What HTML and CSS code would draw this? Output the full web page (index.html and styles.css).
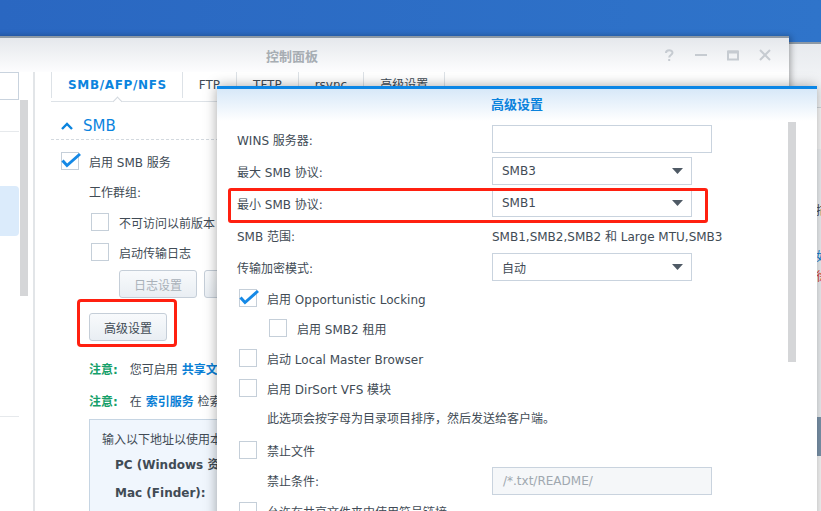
FILE: index.html
```html
<!DOCTYPE html>
<html lang="zh-CN">
<head>
    <meta charset="UTF-8">
    <meta name="viewport" content="width=device-width, initial-scale=1.0">
    <title>控制面板 - 高级设置</title>
    <link rel="stylesheet" href="styles.css">
</head>
<body>

<!-- fenêtre derrière, on n'en voit qu'une bande à droite -->
<div class="window back-window">
    <div class="back-title"></div>
    <div class="back-body">
        <div class="back-panel">
            <p class="back-text">描述</p>
            <p class="back-text back-link">如何</p>
            <p class="back-text back-warn">徐</p>
        </div>
        <div class="back-band"></div>
    </div>
</div>

<!-- fenêtre principale : 控制面板 -->
<div class="window main-window">
    <div class="titlebar">
        <span class="title">控制面板</span>
        <div class="win-controls">
            <svg viewBox="0 0 12 12"><path d="M3 4 C3 0.5 9.5 0.5 9.5 3.8 C9.5 6 6.2 6 6.2 8.5"/><path d="M6.2 10 V12"/></svg>
            <svg viewBox="0 0 12 12"><path d="M0 6 H12"/></svg>
            <svg viewBox="0 0 12 12"><path d="M1 2.5 H11 V10.5 H1 Z"/><path d="M1 3 H11" class="thick"/></svg>
            <svg viewBox="0 0 12 12"><path d="M1 1 L11 11 M11 1 L1 11"/></svg>
        </div>
    </div>

    <div class="win-body">
        <aside class="sidebar">
            <div class="side-list">
                <div class="side-search"></div>
                <div class="side-sep"></div>
                <div class="side-item active"></div>
                <div class="side-sep low"></div>
            </div>
            <div class="side-scroll"></div>
        </aside>

        <main class="content">
            <div class="tabs">
                <span class="tab active">SMB/AFP/NFS</span>
                <span class="tab">FTP</span>
                <span class="tab">TFTP</span>
                <span class="tab">rsync</span>
                <span class="tab">高级设置</span>
            </div>

            <div class="section-head">
                <svg class="chevron" viewBox="0 0 12 8"><path d="M1 7 L6 2 L11 7"/></svg>
                <span>SMB</span>
            </div>

            <div class="smb-form">
                <label class="row">
                    <span class="cb checked"><svg viewBox="0 0 22 18"><path d="M1.5 8.5 L6 13.5 L19 2"/></svg></span>
                    启用 SMB 服务
                </label>
                <div class="row sub">工作群组:</div>
                <label class="row sub-cb"><span class="cb"></span>不可访问以前版本</label>
                <label class="row sub-cb"><span class="cb"></span>启动传输日志</label>

                <div class="btn-row">
                    <button class="btn disabled">日志设置</button>
                    <button class="btn disabled">查看日志</button>
                </div>

                <div class="mark-box">
                    <button class="btn">高级设置</button>
                </div>

                <p class="note"><span class="note-tag">注意:</span>您可启用 <span class="link">共享文件夹</span> 的回收站以保留被删除的文件。</p>
                <p class="note"><span class="note-tag">注意:</span>在 <span class="link">索引服务</span> 检索多媒体文件内容。</p>

                <div class="info-box">
                    <p>输入以下地址以使用本机的文件服务:</p>
                    <p class="info-line">PC (Windows 资源管理器):</p>
                    <p class="info-line">Mac (Finder):</p>
                </div>
            </div>
        </main>
    </div>
</div>

<!-- boîte de dialogue 高级设置 -->
<div class="dialog">
    <div class="dialog-head">高级设置</div>
    <div class="dialog-body">
        <div class="dialog-form">
            <div class="form-row">
                <span class="label">WINS 服务器:</span>
                <span class="field"></span>
            </div>
            <div class="form-row">
                <span class="label">最大 SMB 协议:</span>
                <span class="select">SMB3<svg viewBox="0 0 11 6"><path d="M0 0 H11 L5.5 6 Z"/></svg></span>
            </div>
            <div class="form-row marked">
                <span class="label">最小 SMB 协议:</span>
                <span class="select">SMB1<svg viewBox="0 0 11 6"><path d="M0 0 H11 L5.5 6 Z"/></svg></span>
                <span class="mark"></span>
            </div>
            <div class="form-row">
                <span class="label">SMB 范围:</span>
                <span>SMB1,SMB2,SMB2 和 Large MTU,SMB3</span>
            </div>
            <div class="form-row">
                <span class="label">传输加密模式:</span>
                <span class="select">自动<svg viewBox="0 0 11 6"><path d="M0 0 H11 L5.5 6 Z"/></svg></span>
            </div>

            <label class="cb-row first">
                <span class="cb checked"><svg viewBox="0 0 22 18"><path d="M1.5 8.5 L6 13.5 L19 2"/></svg></span>
                启用 Opportunistic Locking
            </label>
            <label class="cb-row indent"><span class="cb"></span>启用 SMB2 租用</label>
            <label class="cb-row"><span class="cb"></span>启动 Local Master Browser</label>
            <label class="cb-row"><span class="cb"></span>启用 DirSort VFS 模块</label>
            <p class="desc">此选项会按字母为目录项目排序，然后发送给客户端。</p>
            <label class="cb-row"><span class="cb"></span>禁止文件</label>
            <div class="form-row veto">
                <span class="label">禁止条件:</span>
                <span class="field disabled">/*.txt/README/</span>
            </div>
            <label class="cb-row"><span class="cb"></span>允许在共享文件夹中使用符号链接</label>
        </div>
        <div class="dialog-scroll"></div>
    </div>
</div>

</body>
</html>
```

FILE: styles.css
```css
* {
    box-sizing: border-box;
}

body {
    margin: 0;
    width: 821px;
    height: 511px;
    overflow: hidden;
    position: relative;
    background: linear-gradient(90deg, #2a67c1, #2f74ca);
    font-family: "DejaVu Sans", "Noto Sans CJK SC", sans-serif;
    font-size: 12px;
    color: #414b55;
}

p {
    margin: 0;
}

.window {
    position: absolute;
    background: #fff;
    border-top: 2px solid #8d99a5;
}

/* fenêtre arrière */
.back-window {
    left: 789px;
    top: 42px;
    width: 320px;
    height: 480px;
}

.back-title {
    height: 64px;
    background: linear-gradient(#e7eaee, #fafbfc);
    border-bottom: 1px solid #d6dbe0;
}

.back-body {
    padding-left: 25px;
}

.back-panel {
    margin-top: 41px;
    height: 268px;
    padding: 52px 0 0 1px;
    background: #f4f7fa;
    border-left: 1px solid #d3dbe3;
    line-height: 20px;
}

.back-text {
    white-space: nowrap;
}

.back-link {
    margin-top: 26px;
    color: #0a7fd6;
}

.back-warn {
    color: #e0443a;
}

.back-band {
    height: 39px;
    margin-left: -25px;
    background: #7f99b0;
}

/* fenêtre principale */
.main-window {
    left: -205px;
    top: 36px;
    width: 994px;
    height: 480px;
    box-shadow: 2px 0 6px rgba(0, 0, 0, 0.3);
    overflow: hidden;
}

.titlebar {
    height: 34px;
    display: grid;
    grid-template-columns: 1fr auto 1fr;
    align-items: center;
    background: linear-gradient(#e5e8ec, #fdfdfe);
}

.titlebar .title {
    grid-column: 2;
    font-size: 13px;
    font-weight: bold;
    color: #a7adb3;
}

.win-controls {
    justify-self: end;
    display: flex;
    gap: 20px;
    padding-right: 18px;
}

.win-controls svg {
    width: 12px;
    height: 12px;
    fill: none;
    stroke: #c6cbd1;
    stroke-width: 2;
    overflow: visible;
}

.win-controls .thick {
    stroke-width: 3;
}

.win-body {
    display: flex;
    height: 444px;
}

.sidebar {
    width: 240px;
    flex: none;
    display: flex;
    border-right: 2px solid #e2e5e8;
}

.side-list {
    width: 224px;
}

.side-search {
    height: 28px;
    border: 1px solid #c9d3de;
}

.side-sep {
    height: 1px;
    margin-top: 31px;
    background: #e6e9ec;
}

.side-sep.low {
    margin-top: 180px;
}

.side-item.active {
    height: 50px;
    margin-top: 54px;
    background: #dbebfb;
    border-radius: 0 4px 4px 0;
}

.side-scroll {
    width: 8px;
    height: 196px;
    margin: 28px 0 0 1px;
    background: #d5d6d8;
}

.content {
    flex: 1;
    min-width: 0;
    padding-left: 16px;
}

/* onglets */
.tabs {
    display: flex;
    height: 30px;
    border-bottom: 1px solid #dde2e7;
}

.tab {
    position: relative;
    height: 26px;
    line-height: 26px;
    padding: 0 16px;
    border-right: 1px solid #dde2e7;
    white-space: nowrap;
}

.tab.active {
    border-left: 1px solid #dde2e7;
    color: #0b84de;
    font-weight: bold;
    letter-spacing: 0.65px;
    padding: 0 15px 0 16px;
}

.tab.active::after {
    content: "";
    position: absolute;
    top: 26px;
    left: 50%;
    width: 6px;
    height: 6px;
    margin-left: -3px;
    background: #fff;
    border-top: 1px solid #d3d9df;
    border-left: 1px solid #d3d9df;
    transform: rotate(45deg);
}

.section-head {
    display: flex;
    align-items: center;
    gap: 10px;
    height: 28px;
    margin-top: 10px;
    padding-left: 10px;
    border-bottom: 1px dashed #d3d9df;
    color: #0b84de;
    font-size: 15px;
}

.chevron {
    width: 12px;
    height: 8px;
    fill: none;
    stroke: #0b84de;
    stroke-width: 2.4;
}

/* formulaire SMB */
.smb-form {
    padding: 6px 0 0 10px;
}

.row {
    display: flex;
    align-items: center;
    gap: 10px;
    height: 30px;
    white-space: nowrap;
}

.row.sub {
    height: 31px;
    padding-left: 28px;
}

.row.sub-cb {
    padding-left: 30px;
}

.cb {
    position: relative;
    flex: none;
    width: 18px;
    height: 18px;
    border: 1px solid #c5cfd9;
    background: #fff;
}

.cb svg {
    position: absolute;
    left: -1px;
    top: -1px;
    width: 22px;
    height: 18px;
    overflow: visible;
    fill: none;
    stroke: #1589e6;
    stroke-width: 3;
}

.btn {
    height: 28px;
    padding: 0 14px;
    border: 1px solid #c5ced8;
    border-radius: 3px;
    background: linear-gradient(#f8fafc, #e9eef3);
    font-family: inherit;
    font-size: 12px;
    color: #414b55;
    white-space: nowrap;
}

.btn.disabled {
    color: #a9b1b9;
}

.btn-row {
    display: flex;
    gap: 7px;
    margin-top: 3px;
    padding-left: 58px;
}

/* encadré rouge d'annotation */
.mark-box {
    width: fit-content;
    margin: 1px 0 0 16px;
    padding: 11px 7px 3px 9px;
    border: 3px solid #ff2010;
    border-radius: 4px;
}

.note {
    margin-top: 13px;
    padding-left: 28px;
    line-height: 20px;
    white-space: nowrap;
}

.note + .note {
    margin-top: 12px;
}

.note-tag {
    margin-right: 12px;
    color: #16a06a;
    font-weight: bold;
}

.link {
    color: #0a7fd6;
    font-weight: bold;
}

.info-box {
    margin: 7px 0 0 28px;
    padding: 10px 12px;
    height: 120px;
    background: #f0f6fd;
    border: 1px solid #c6d5e3;
    line-height: 20px;
    white-space: nowrap;
}

.info-line {
    margin-top: 2px;
    padding-left: 13px;
    line-height: 26px;
    font-weight: bold;
}

/* boîte de dialogue */
.dialog {
    position: absolute;
    left: 217px;
    top: 86px;
    width: 600px;
    height: 440px;
    background: #fff;
    border-top: 3px solid #0b86e6;
    box-shadow: 0 0 12px rgba(0, 0, 0, 0.35);
}

.dialog-head {
    height: 32px;
    line-height: 32px;
    text-align: center;
    font-size: 13px;
    font-weight: bold;
    color: #0a82dc;
    background: linear-gradient(#d7e8f8, #fff);
}

.dialog-body {
    display: flex;
    padding: 0 21px 0 20px;
}

.dialog-form {
    flex: 1;
    padding-top: 4px;
}

.dialog-scroll {
    flex: none;
    width: 8px;
    height: 240px;
    margin-top: 1px;
    background: #d5d6d8;
}

.form-row {
    position: relative;
    display: flex;
    align-items: center;
    height: 28px;
    margin-bottom: 4px;
    white-space: nowrap;
}

.form-row .label {
    width: 255px;
    flex: none;
}

.field {
    width: 220px;
    height: 28px;
    line-height: 26px;
    padding-left: 10px;
    border: 1px solid #c9d3de;
}

.field.disabled {
    background: #f5f7f9;
    color: #a0a8b0;
}

.select {
    display: flex;
    align-items: center;
    justify-content: space-between;
    width: 200px;
    height: 28px;
    padding: 0 8px 0 9px;
    border: 1px solid #c9d3de;
}

.select svg {
    width: 11px;
    height: 6px;
    fill: #4f5a65;
}

.mark {
    position: absolute;
    left: -9px;
    top: -1px;
    width: 480px;
    height: 35px;
    border: 3px solid #ff2010;
    border-radius: 3px;
}

.cb-row {
    display: flex;
    align-items: center;
    gap: 10px;
    height: 30px;
    padding-left: 2px;
    white-space: nowrap;
}

.cb-row.first {
    margin-top: -2px;
}

.cb-row.indent {
    padding-left: 32px;
}

.desc {
    height: 32px;
    line-height: 32px;
    padding-left: 30px;
}

.form-row.veto {
    height: 31px;
    margin-bottom: 0;
}

.form-row.veto .label {
    width: 255px;
    padding-left: 30px;
}
```
